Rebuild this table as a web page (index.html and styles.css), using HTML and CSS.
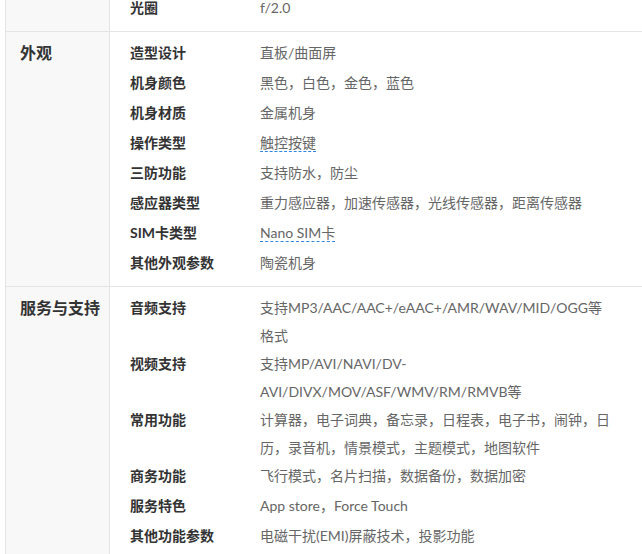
FILE: index.html
```html
<!DOCTYPE html>
<html lang="zh-CN">
  <head>
    <meta charset="UTF-8" />
    <meta name="viewport" content="width=device-width, initial-scale=1.0" />
    <title>参数</title>
    <link rel="stylesheet" href="styles.css">
  </head>
  <body>
    <div class="specs">
      <div class="spec_group">
        <div class="group_name"></div>
        <div class="group_items">
          <div class="item">
            <span class="item_name">光圈</span>
            <span class="item_value">f/2.0</span>
          </div>
        </div>
      </div>

      <div class="spec_group">
        <div class="group_name">外观</div>
        <div class="group_items">
          <div class="item">
            <span class="item_name">造型设计</span>
            <span class="item_value">直板/曲面屏</span>
          </div>
          <div class="item">
            <span class="item_name">机身颜色</span>
            <span class="item_value">黑色，白色，金色，蓝色</span>
          </div>
          <div class="item">
            <span class="item_name">机身材质</span>
            <span class="item_value">金属机身</span>
          </div>
          <div class="item">
            <span class="item_name">操作类型</span>
            <span class="item_value"><span class="tip">触控按键</span></span>
          </div>
          <div class="item">
            <span class="item_name">三防功能</span>
            <span class="item_value">支持防水，防尘</span>
          </div>
          <div class="item">
            <span class="item_name">感应器类型</span>
            <span class="item_value">重力感应器，加速传感器，光线传感器，距离传感器</span>
          </div>
          <div class="item">
            <span class="item_name">SIM卡类型</span>
            <span class="item_value"><span class="tip">Nano SIM卡</span></span>
          </div>
          <div class="item">
            <span class="item_name">其他外观参数</span>
            <span class="item_value">陶瓷机身</span>
          </div>
        </div>
      </div>

      <div class="spec_group">
        <div class="group_name">服务与支持</div>
        <div class="group_items">
          <div class="item">
            <span class="item_name">音频支持</span>
            <span class="item_value">支持MP3/AAC/AAC+/eAAC+/AMR/WAV/MID/OGG等格式</span>
          </div>
          <div class="item">
            <span class="item_name">视频支持</span>
            <span class="item_value">支持MP/AVI/NAVI/DV-AVI/DIVX/MOV/ASF/WMV/RM/RMVB等</span>
          </div>
          <div class="item">
            <span class="item_name">常用功能</span>
            <span class="item_value">计算器，电子词典，备忘录，日程表，电子书，闹钟，日历，录音机，情景模式，主题模式，地图软件</span>
          </div>
          <div class="item">
            <span class="item_name">商务功能</span>
            <span class="item_value">飞行模式，名片扫描，数据备份，数据加密</span>
          </div>
          <div class="item">
            <span class="item_name">服务特色</span>
            <span class="item_value">App store，Force Touch</span>
          </div>
          <div class="item">
            <span class="item_name">其他功能参数</span>
            <span class="item_value">电磁干扰(EMI)屏蔽技术，投影功能</span>
          </div>
        </div>
      </div>
    </div>
  </body>
</html>
```

FILE: styles.css
```css
* {
  box-sizing: border-box;
  padding: 0;
  margin: 0;
}
body {
  overflow: hidden;
  background-color: #fff;
  font-family: "Lato", "Noto Sans CJK SC", sans-serif;
  font-size: 14px;
  color: #333;
}
.specs {
  width: 680px;
  margin: -13px 0 0 5px;
  border-left: 1px solid #e4e4e4;
}
.spec_group {
  display: flex;
  border-bottom: 1px solid #e4e4e4;
}
.group_name {
  width: 104px;
  flex-shrink: 0;
  padding: 7px 0 0 14px;
  background-color: #f8f8f8;
  border-right: 1px solid #e4e4e4;
  font-size: 16px;
  font-weight: bold;
  line-height: 28px;
  color: #333;
}
.group_items {
  padding: 7px 0 7px 20px;
}
.item {
  display: flex;
  min-height: 30px;
  line-height: 28px;
}
.item_name {
  width: 130px;
  flex-shrink: 0;
  font-weight: bold;
  color: #333;
}
.item_value {
  width: 352px;
  color: #666;
}
.tip {
  border-bottom: 1px dashed #3087e0;
}
```
